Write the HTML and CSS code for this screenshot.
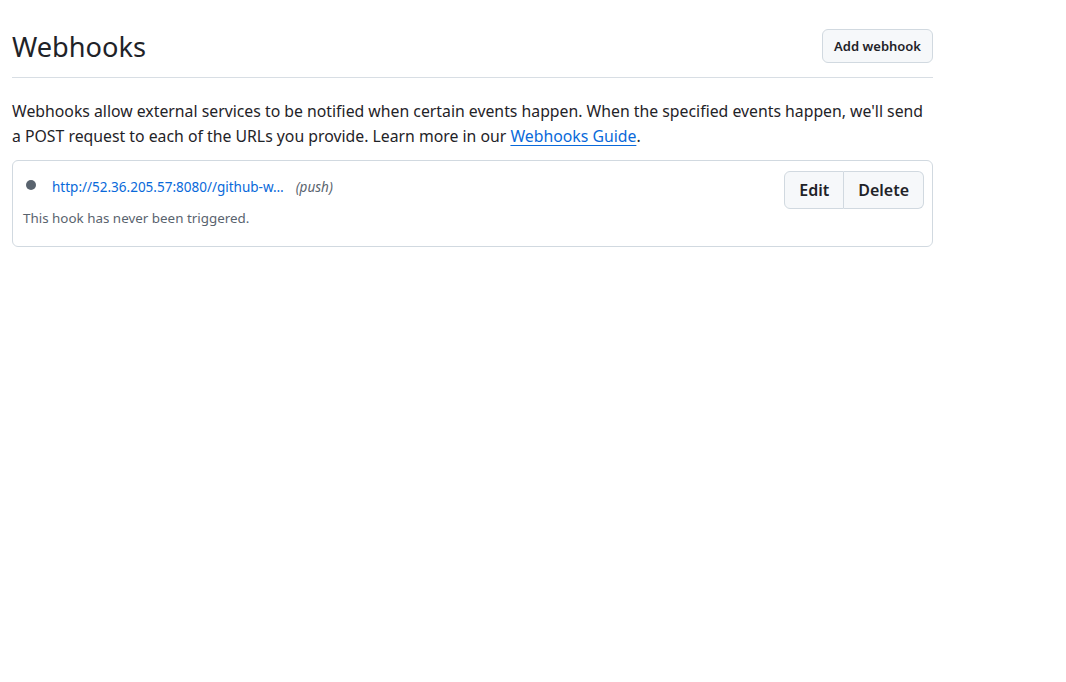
FILE: index.html
```html
<!DOCTYPE html>
<html>
<head>
<meta charset="utf-8">
<link rel="stylesheet" href="styles.css">
</head>
<body>
<div class="page">
  <div class="subhead">
    <h2 class="subhead-title">Webhooks</h2>
    <button class="btn btn-sm">Add webhook</button>
  </div>
  <p class="intro">Webhooks allow external services to be notified when certain events happen. When the specified events happen, we'll send a POST request to each of the URLs you provide. Learn more in our <a href="#" class="link">Webhooks Guide</a>.</p>
  <div class="box">
    <div class="hook">
      <div class="hook-main">
        <div class="hook-line">
          <span class="dot"></span>
          <a href="#" class="hook-url">http://52.36.205.57:8080//github-w…</a>
          <em class="hook-events">(push)</em>
        </div>
        <div class="hook-status">This hook has never been triggered.</div>
      </div>
      <div class="btn-group">
        <button class="btn btn-group-item">Edit</button>
        <button class="btn btn-group-item">Delete</button>
      </div>
    </div>
  </div>
</div>
</body>
</html>
```
FILE: styles.css
```css
* { box-sizing: border-box; }
body {
  margin: 0;
  background: #ffffff;
  font-family: "Noto Sans", "Open Sans", sans-serif;
  color: #1f2328;
}
.page {
  width: 921px;
  margin-left: 12px;
  padding-top: 29px;
}
.subhead {
  display: flex;
  align-items: flex-start;
  justify-content: space-between;
  border-bottom: 1px solid #d8dee4;
  padding-bottom: 12px;
}
.subhead-title {
  margin: 0;
  font-size: 27.2px;
  font-weight: 400;
  line-height: 36px;
}
.btn {
  font-family: inherit;
  color: #1f2328;
  background: #f6f8fa;
  border: 1px solid #d1d9e0;
  border-radius: 6px;
  cursor: pointer;
}
.btn-sm {
  height: 34px;
  padding: 0 11px;
  font-size: 13px;
  font-weight: 600;
}
.intro {
  margin: 21px 0 11px;
  font-size: 15.8px;
  line-height: 25px;
}
.link {
  color: #0969da;
  text-decoration: underline;
  text-underline-offset: 3px;
}
.box {
  border: 1px solid #d1d9e0;
  border-radius: 6px;
}
.hook {
  display: flex;
  justify-content: space-between;
  padding: 10px 8px 18px 10px;
}
.hook-main {
  padding-top: 6px;
}
.hook-line {
  display: flex;
  align-items: center;
  font-size: 13.5px;
  line-height: 20px;
}
.dot {
  width: 10px;
  height: 10px;
  border-radius: 50%;
  background: #59636e;
  margin: -4px 16px 0 3px;
}
.hook-url {
  color: #0969da;
  text-decoration: none;
}
.hook-events {
  color: #59636e;
  margin-left: 12px;
}
.hook-status {
  margin-top: 11px;
  font-size: 13.4px;
  line-height: 20px;
  color: #59636e;
}
.btn-group {
  display: flex;
  height: 38px;
}
.btn-group-item {
  height: 38px;
  font-size: 16px;
  font-weight: 600;
  padding: 0 14px;
}
.btn-group-item:first-child {
  border-top-right-radius: 0;
  border-bottom-right-radius: 0;
}
.btn-group-item:last-child {
  border-left: 0;
  border-top-left-radius: 0;
  border-bottom-left-radius: 0;
}
```
